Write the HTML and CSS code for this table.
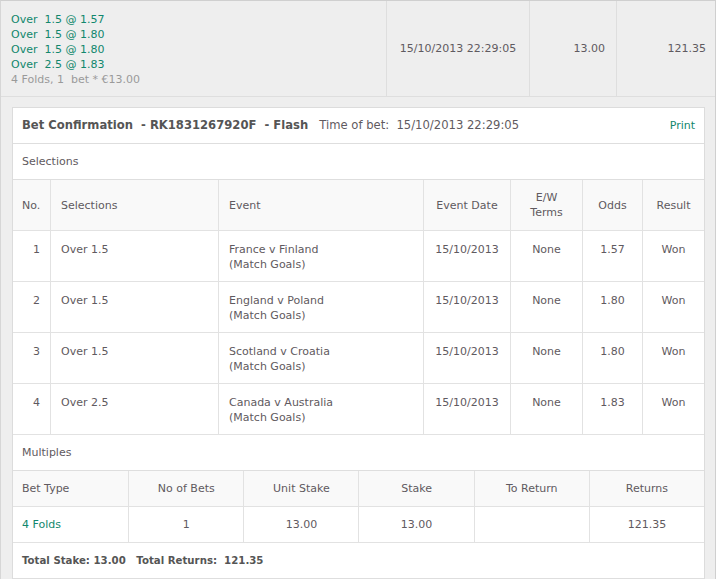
FILE: index.html
```html
<!DOCTYPE html>
<html>
<head>
<meta charset="utf-8">
<link rel="stylesheet" href="styles.css">
</head>
<body>
<div class="wrap">
  <div class="summary">
    <div class="sc sc-sel">
      <div class="pick">Over&nbsp; 1.5 @ 1.57</div>
      <div class="pick">Over&nbsp; 1.5 @ 1.80</div>
      <div class="pick">Over&nbsp; 1.5 @ 1.80</div>
      <div class="pick">Over&nbsp; 2.5 @ 1.83</div>
      <div class="folds">4 Folds, 1&nbsp; bet * €13.00</div>
    </div>
    <div class="sc sc-date">15/10/2013 22:29:05</div>
    <div class="sc sc-stake">13.00</div>
    <div class="sc sc-ret">121.35</div>
  </div>
  <div class="detail">
    <div class="panel">
      <div class="phead">
        <div class="ptitle"><b>Bet Confirmation&nbsp; - RK1831267920F&nbsp; - Flash</b>&nbsp;&nbsp; Time of bet:&nbsp; 15/10/2013 22:29:05</div>
        <div class="print">Print</div>
      </div>
      <div class="section">Selections</div>
      <div class="sel-grid">
        <div class="h c-no">No.</div>
        <div class="h">Selections</div>
        <div class="h">Event</div>
        <div class="h ctr">Event Date</div>
        <div class="h ctr">E/W<br>Terms</div>
        <div class="h ctr">Odds</div>
        <div class="h ctr">Result</div>

        <div class="d c-num">1</div>
        <div class="d">Over 1.5</div>
        <div class="d">France v Finland<br>(Match Goals)</div>
        <div class="d ctr">15/10/2013</div>
        <div class="d ctr">None</div>
        <div class="d ctr">1.57</div>
        <div class="d ctr">Won</div>

        <div class="d c-num">2</div>
        <div class="d">Over 1.5</div>
        <div class="d">England v Poland<br>(Match Goals)</div>
        <div class="d ctr">15/10/2013</div>
        <div class="d ctr">None</div>
        <div class="d ctr">1.80</div>
        <div class="d ctr">Won</div>

        <div class="d c-num">3</div>
        <div class="d">Over 1.5</div>
        <div class="d">Scotland v Croatia<br>(Match Goals)</div>
        <div class="d ctr">15/10/2013</div>
        <div class="d ctr">None</div>
        <div class="d ctr">1.80</div>
        <div class="d ctr">Won</div>

        <div class="d c-num">4</div>
        <div class="d">Over 2.5</div>
        <div class="d">Canada v Australia<br>(Match Goals)</div>
        <div class="d ctr">15/10/2013</div>
        <div class="d ctr">None</div>
        <div class="d ctr">1.83</div>
        <div class="d ctr">Won</div>
      </div>
      <div class="section">Multiples</div>
      <div class="mul-grid">
        <div class="mh">Bet Type</div>
        <div class="mh ctr">No of Bets</div>
        <div class="mh ctr">Unit Stake</div>
        <div class="mh ctr">Stake</div>
        <div class="mh ctr">To Return</div>
        <div class="mh ctr">Returns</div>

        <div class="md green">4 Folds</div>
        <div class="md ctr">1</div>
        <div class="md ctr">13.00</div>
        <div class="md ctr">13.00</div>
        <div class="md ctr"></div>
        <div class="md ctr">121.35</div>
      </div>
      <div class="totals"><b>Total Stake: 13.00&nbsp;&nbsp; Total Returns:&nbsp; 121.35</b></div>
    </div>
  </div>
</div>
</body>
</html>
```

FILE: styles.css
```css
html, body {
  margin: 0;
  padding: 0;
  background: #fff;
}
body {
  font-family: "DejaVu Sans", Verdana, sans-serif;
  font-size: 11px;
  line-height: 15px;
  color: #5f5a60;
}
.wrap {
  width: 714px;
  background: #eeeeee;
  border-top: 1px solid #cfcfcf;
  border-left: 1px solid #d6d6d6;
  border-right: 1px solid #cfcfcf;
  height: 578px;
  overflow: hidden;
}
.summary {
  display: flex;
  height: 95px;
  border-bottom: 1px solid #dedede;
}
.sc {
  display: flex;
  flex-direction: column;
  justify-content: center;
}
.sc-sel {
  width: 375px;
  padding-left: 10px;
  padding-top: 1px;
}
.pick { color: #11876d; }
.folds { color: #9a9a9a; }
.sc-date {
  width: 142px;
  border-left: 1px solid #dedede;
  align-items: center;
}
.sc-stake {
  width: 75px;
  border-left: 1px solid #dedede;
  align-items: flex-end;
  padding-right: 11px;
}
.sc-ret {
  flex: 1;
  border-left: 1px solid #dedede;
  align-items: flex-end;
  padding-right: 9px;
}
.detail {
  padding: 10px 10px 0 11px;
}
.panel {
  background: #fff;
  border: 1px solid #dcdcdc;
}
.phead {
  display: flex;
  justify-content: space-between;
  align-items: center;
  height: 35px;
  padding: 0 9px;
  border-bottom: 1px solid #dedede;
}
.ptitle { font-size: 11.6px; }
.ptitle b { font-weight: bold; color: #555; }
.print { color: #11876d; font-size: 11px; }
.section {
  height: 35px;
  line-height: 35px;
  padding-left: 9px;
  border-bottom: 1px solid #dedede;
}
.sel-grid {
  display: grid;
  grid-template-columns: 37px 168px 205px 87px 72px 60px 1fr;
}
.sel-grid > div {
  border-left: 1px solid #e2e2e2;
  border-bottom: 1px solid #e2e2e2;
}
.sel-grid > div:nth-child(7n+1) { border-left: none; }
.h {
  background: #f9f9f9;
  height: 50px;
  display: flex;
  align-items: center;
  padding-left: 10px;
}
.h.c-no { padding-left: 9px; }
.h.ctr { justify-content: center; padding-left: 0; text-align: center; }
.d {
  height: 51px;
  box-sizing: border-box;
  padding: 11px 0 0 10px;
}
.d.ctr { text-align: center; padding-left: 0; }
.d.c-num { text-align: right; padding-left: 0; padding-right: 10px; }
.mul-grid {
  display: grid;
  grid-template-columns: repeat(6, 1fr);
}
.mul-grid > div {
  height: 35px;
  line-height: 35px;
  border-left: 1px solid #e2e2e2;
  border-bottom: 1px solid #e2e2e2;
  padding-left: 9px;
}
.mul-grid > div:nth-child(6n+1) { border-left: none; }
.mul-grid > div.ctr { text-align: center; padding-left: 0; }
.mh { background: #f9f9f9; }
.green { color: #11876d; }
.totals {
  height: 35px;
  line-height: 35px;
  padding-left: 9px;
  border-bottom: 1px solid #dedede;
}
.totals b { color: #555; font-size: 10.2px; }
```
